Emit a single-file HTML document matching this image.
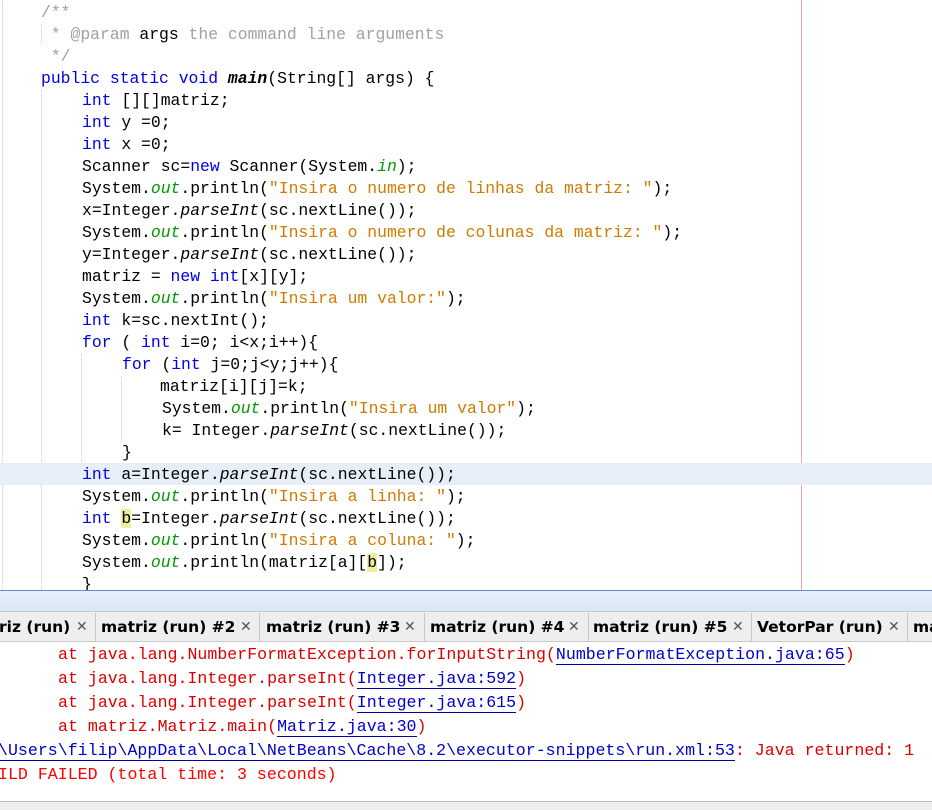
<!DOCTYPE html>
<html><head><meta charset="utf-8"><style>
body{margin:0;width:932px;height:809px;overflow:hidden;background:#fff;position:relative;font-family:"Liberation Mono","Courier New",Courier,monospace;}
.l{position:absolute;white-space:pre;font-size:16.4px;line-height:22px;height:22px;color:#000;font-family:"Liberation Mono","Courier New",Courier,monospace;}
.k{color:#0000e6}.c{color:#a0a0a0}.s{color:#ce7b00}.f{color:#009900;font-style:italic}.i{font-style:italic}.b{font-weight:bold}
.hl{background:#eeeea0}
.o{position:absolute;white-space:pre;font-size:16.6px;line-height:24px;color:#d00;font-family:"Liberation Mono","Courier New",Courier,monospace;}
.u{color:#0000cc;border-bottom:1.5px solid #0000aa;}
.tab{position:absolute;top:614px;height:27px;line-height:27px;font-family:"DejaVu Sans",sans-serif;font-weight:bold;font-size:15.5px;color:#000;white-space:nowrap;}
.x{position:absolute;top:614px;height:27px;line-height:27px;font-family:"DejaVu Sans",sans-serif;font-size:14px;color:#555;}
.sep{position:absolute;top:613px;height:29px;width:1px;background:#c8c8c8;}
</style></head><body>
<div style="position:absolute;left:2px;top:0;height:590px;border-left:1px dotted #ccc"></div>
<div style="position:absolute;left:41px;top:24px;height:20px;border-left:1px dotted #ccc"></div>
<div style="position:absolute;left:41px;top:90px;height:500px;border-left:1px dotted #ccc"></div>
<div style="position:absolute;left:81px;top:354px;height:110px;border-left:1px dotted #ccc"></div>
<div style="position:absolute;left:121px;top:376px;height:66px;border-left:1px dotted #ccc"></div>
<div style="position:absolute;left:801px;top:0;height:590px;width:1px;background:#f4a6a6"></div>
<div style="position:absolute;left:0;top:463px;width:932px;height:22px;background:#e8eef7"></div>

<div class="l c" style="left:41px;top:2px">/**</div>
<div class="l c" style="left:41px;top:24px"> * @param <span style="color:#000">args</span> the command line arguments</div>
<div class="l c" style="left:41px;top:46px"> */</div>
<div class="l" style="left:41px;top:68px"><span class="k">public static void</span> <span class="b i">main</span>(String[] args) {</div>
<div class="l" style="left:82px;top:90px"><span class="k">int</span> [][]matriz;</div>
<div class="l" style="left:82px;top:112px"><span class="k">int</span> y =0;</div>
<div class="l" style="left:82px;top:134px"><span class="k">int</span> x =0;</div>
<div class="l" style="left:82px;top:156px">Scanner sc=<span class="k">new</span> Scanner(System.<span class="f">in</span>);</div>
<div class="l" style="left:82px;top:178px">System.<span class="f">out</span>.println(<span class="s">"Insira o numero de linhas da matriz: "</span>);</div>
<div class="l" style="left:82px;top:200px">x=Integer.<span class="i">parseInt</span>(sc.nextLine());</div>
<div class="l" style="left:82px;top:222px">System.<span class="f">out</span>.println(<span class="s">"Insira o numero de colunas da matriz: "</span>);</div>
<div class="l" style="left:82px;top:244px">y=Integer.<span class="i">parseInt</span>(sc.nextLine());</div>
<div class="l" style="left:82px;top:266px">matriz = <span class="k">new int</span>[x][y];</div>
<div class="l" style="left:82px;top:288px">System.<span class="f">out</span>.println(<span class="s">"Insira um valor:"</span>);</div>
<div class="l" style="left:82px;top:310px"><span class="k">int</span> k=sc.nextInt();</div>
<div class="l" style="left:82px;top:332px"><span class="k">for</span> ( <span class="k">int</span> i=0; i&lt;x;i++){</div>
<div class="l" style="left:122px;top:354px"><span class="k">for</span> (<span class="k">int</span> j=0;j&lt;y;j++){</div>
<div class="l" style="left:160px;top:376px">matriz[i][j]=k;</div>
<div class="l" style="left:162px;top:398px">System.<span class="f">out</span>.println(<span class="s">"Insira um valor"</span>);</div>
<div class="l" style="left:162px;top:420px">k= Integer.<span class="i">parseInt</span>(sc.nextLine());</div>
<div class="l" style="left:122px;top:442px">}</div>
<div class="l" style="left:82px;top:464px"><span class="k">int</span> a=Integer.<span class="i">parseInt</span>(sc.nextLine());</div>
<div class="l" style="left:82px;top:486px">System.<span class="f">out</span>.println(<span class="s">"Insira a linha: "</span>);</div>
<div class="l" style="left:82px;top:508px"><span class="k">int</span> <span class="hl">b</span>=Integer.<span class="i">parseInt</span>(sc.nextLine());</div>
<div class="l" style="left:82px;top:530px">System.<span class="f">out</span>.println(<span class="s">"Insira a coluna: "</span>);</div>
<div class="l" style="left:82px;top:552px">System.<span class="f">out</span>.println(matriz[a][<span class="hl">b</span>]);</div>
<div class="l" style="left:82px;top:574px;height:16px;overflow:hidden">}</div>

<div style="position:absolute;left:0;top:590px;width:932px;height:1px;background:#5b8fc7"></div>
<div style="position:absolute;left:0;top:591px;width:932px;height:20px;background:linear-gradient(#e6f0fb,#d9e7f6)"></div>
<div style="position:absolute;left:0;top:611px;width:932px;height:31px;background:#eeeeee;border-top:1px solid #c9c9c9;border-bottom:1px solid #c9c9c9;box-sizing:border-box"></div>
<div class="tab" style="left:-1px">riz (run)</div><div class="x" style="left:76px">✕</div><div class="sep" style="left:95px"></div>
<div class="tab" style="left:101px">matriz (run) #2</div><div class="x" style="left:240px">✕</div><div class="sep" style="left:259px"></div>
<div class="tab" style="left:266px">matriz (run) #3</div><div class="x" style="left:404px">✕</div><div class="sep" style="left:424px"></div>
<div class="tab" style="left:430px">matriz (run) #4</div><div class="x" style="left:568px">✕</div><div class="sep" style="left:588px"></div>
<div class="tab" style="left:593px">matriz (run) #5</div><div class="x" style="left:732px">✕</div><div class="sep" style="left:751px"></div>
<div class="tab" style="left:757px">VetorPar (run)</div><div class="x" style="left:888px">✕</div><div class="sep" style="left:907px"></div>
<div class="tab" style="left:913px">matriz</div>

<div class="o" style="left:58px;top:643px">at java.lang.NumberFormatException.forInputString(<span class="u">NumberFormatException.java:65</span>)</div>
<div class="o" style="left:58px;top:667px">at java.lang.Integer.parseInt(<span class="u">Integer.java:592</span>)</div>
<div class="o" style="left:58px;top:691px">at java.lang.Integer.parseInt(<span class="u">Integer.java:615</span>)</div>
<div class="o" style="left:58px;top:715px">at matriz.Matriz.main(<span class="u">Matriz.java:30</span>)</div>
<div class="o" style="left:-2px;top:739px"><span class="u">\Users\filip\AppData\Local\NetBeans\Cache\8.2\executor-snippets\run.xml:53</span>: Java returned: 1</div>
<div class="o" style="left:-2px;top:763px;color:#f00">ILD FAILED (total time: 3 seconds)</div>

<div style="position:absolute;left:0;top:801px;width:932px;height:8px;background:#eeeeee;border-top:1px solid #bdbdbd"></div>
</body></html>
